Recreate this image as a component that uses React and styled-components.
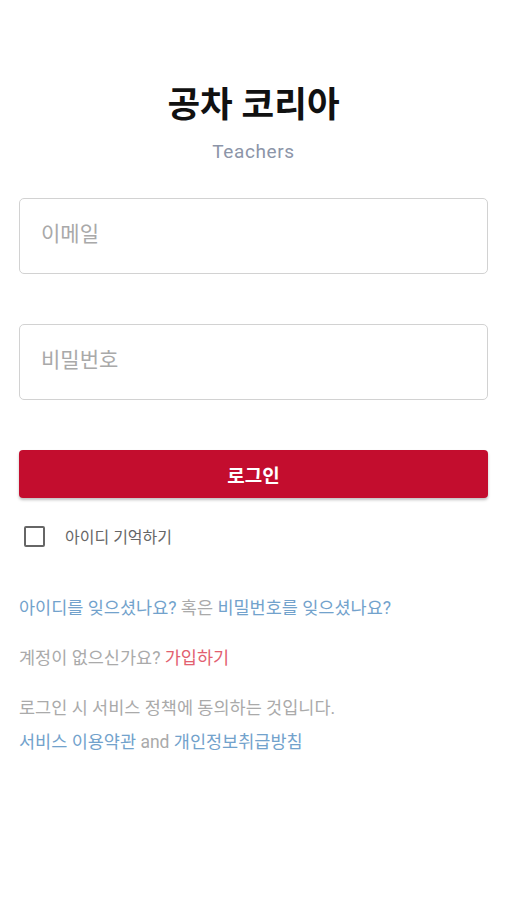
import React, { useState } from 'react'
import styled, { createGlobalStyle } from 'styled-components'

const GlobalStyle = createGlobalStyle`
    body {
        margin: 0;
        background: #ffffff;
        font-family: Roboto, "Noto Sans CJK KR", sans-serif;
    }
`

function App() {
    const [remember, setRemember] = useState(false)
    return (
        <Page>
            <GlobalStyle />
            <Header>
                <Title>공차 코리아</Title>
                <Subtitle>Teachers</Subtitle>
            </Header>
            <Field placeholder="이메일" />
            <Field placeholder="비밀번호" type="password" />
            <LoginButton>로그인</LoginButton>
            <RememberRow onClick={() => setRemember(!remember)}>
                <Box checked={remember} />
                <RememberLabel>아이디 기억하기</RememberLabel>
            </RememberRow>
            <Links>
                <Line>
                    <Link>아이디를 잊으셨나요?</Link> 혹은 <Link>비밀번호를 잊으셨나요?</Link>
                </Line>
                <Line>
                    계정이 없으신가요? <SignUp>가입하기</SignUp>
                </Line>
                <Policy>
                    <Line>로그인 시 서비스 정책에 동의하는 것입니다.</Line>
                    <Line>
                        <Link>서비스 이용약관</Link> and <Link>개인정보취급방침</Link>
                    </Line>
                </Policy>
            </Links>
        </Page>
    )
}

const Page = styled.div`
    width: 506px;
    min-height: 900px;
    box-sizing: border-box;
    padding: 83px 18px 0 19px;
    display: flex;
    flex-direction: column;
`
const Header = styled.div`
    display: flex;
    flex-direction: column;
    align-items: center;
    margin-bottom: 35px;
`
const Title = styled.h1`
    margin: 0;
    font-size: 35.5px;
    font-weight: 700;
    color: #111;
    line-height: 44px;
`
const Subtitle = styled.div`
    margin-top: 14px;
    font-size: 19px;
    letter-spacing: 0.6px;
    color: #8c95a8;
    line-height: 22px;
`
const Field = styled.input`
    box-sizing: border-box;
    width: 100%;
    height: 76px;
    border: 1.5px solid #d2d2d2;
    border-radius: 5px;
    padding: 0 21px;
    padding-bottom: 4px;
    font-family: Roboto, "Noto Sans CJK KR", sans-serif;
    font-size: 21px;
    color: #333;
    outline: none;
    margin-bottom: 50px;
    &::placeholder {
        color: #a9a9a9;
    }
`
const LoginButton = styled.button`
    height: 48px;
    border: none;
    border-radius: 4px;
    background: #c30d2e;
    color: #fff;
    font-family: Roboto, "Noto Sans CJK KR", sans-serif;
    font-size: 19px;
    font-weight: 700;
    box-shadow: 0 2px 3px rgba(0, 0, 0, 0.25);
    cursor: pointer;
`
const RememberRow = styled.label`
    display: flex;
    align-items: center;
    gap: 20px;
    margin-top: 26px;
    padding-left: 5px;
    cursor: pointer;
`
const Box = styled.span`
    box-sizing: border-box;
    width: 21px;
    height: 21px;
    border: 2px solid #666;
    border-radius: 2px;
    background: ${p => (p.checked ? '#666' : 'transparent')};
`
const RememberLabel = styled.span`
    font-size: 16px;
    color: #666;
`
const Links = styled.div`
    margin-top: 48px;
    display: flex;
    flex-direction: column;
    gap: 26px;
`
const Line = styled.div`
    font-size: 17.5px;
    line-height: 24px;
    color: #aaaaaa;
`
const Link = styled.span`
    color: #72a2cc;
`
const SignUp = styled.span`
    color: #e2606f;
`
const Policy = styled.div`
    display: flex;
    flex-direction: column;
    gap: 10px;
`

export default App
